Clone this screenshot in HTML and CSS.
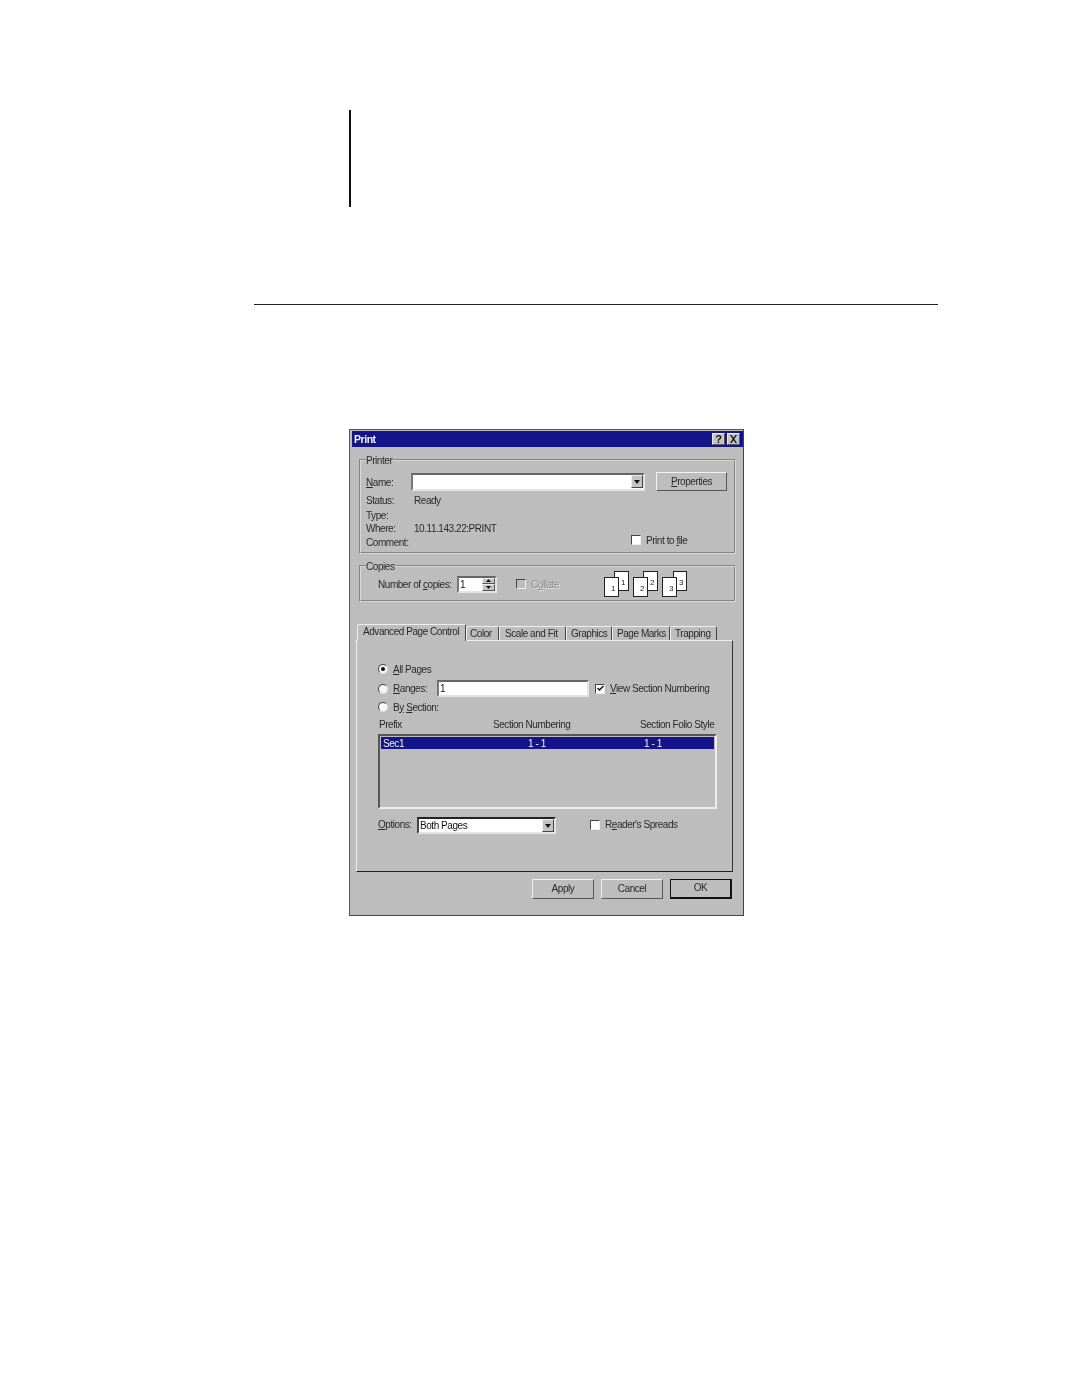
FILE: index.html
```html
<!DOCTYPE html>
<html lang="en">

<head>
    <meta charset="UTF-8">
    <meta name="viewport" content="width=device-width, initial-scale=1.0">
    <title>Print dialog</title>
    <link rel="stylesheet" href="styles.css">
</head>

<body>
    <div class="changeBar"></div>
    <div class="pageRule"></div>

    <div class="dialog">
        <div class="titleBar">
            <span class="titleText">Print</span>
            <div class="titleBtns">
                <button class="titleBtn helpBtn">?</button>
                <button class="titleBtn closeBtn">
                    <svg width="9" height="8" viewBox="0 0 9 8"><path d="M1 0L2.500 0L4.500 2.800L6.500 0L8 0L5.300 4L8 8L6.500 8L4.500 5.200L2.500 8L1 8L3.700 4Z" fill="#111"/></svg>
                </button>
            </div>
        </div>

        <fieldset class="group printerGroup">
            <legend>Printer</legend>
            <div class="row nameRow">
                <label class="rowLabel nameLabel"><u>N</u>ame:</label>
                <div class="combo nameCombo">
                    <span class="comboText"></span>
                    <span class="comboArrow"></span>
                </div>
                <button class="btn propsBtn"><u>P</u>roperties</button>
            </div>
            <div class="row statusRow"><span class="rowLabel">Status:</span><span>Ready</span></div>
            <div class="row typeRow"><span class="rowLabel">Type:</span></div>
            <div class="row whereRow"><span class="rowLabel">Where:</span><span>10.11.143.22:PRINT</span></div>
            <div class="row commentRow">
                <span class="rowLabel">Comment:</span>
                <label class="check printFile"><span class="checkBox"></span><span>Print to <u>f</u>ile</span></label>
            </div>
        </fieldset>

        <fieldset class="group copiesGroup">
            <legend>Copies</legend>
            <div class="row copiesRow">
                <label class="copiesLabel">Number of <u>c</u>opies:</label>
                <div class="spinner">
                    <span class="spinnerText">1</span>
                    <div class="spinBtns">
                        <span class="spinBtn"><svg width="7" height="4" viewBox="0 0 7 4"><path d="M3.500 0L6 3H1Z" fill="#111"/></svg></span>
                        <span class="spinBtn"><svg width="7" height="4" viewBox="0 0 7 4"><path d="M1 1H6L3.500 4Z" fill="#111"/></svg></span>
                    </div>
                </div>
                <label class="check collate"><span class="checkBox disabledBox"></span><span class="disabledText">C<u>o</u>llate</span></label>
                <svg class="collateIcons" width="84" height="26" viewBox="0 0 84 26">
                    <g class="sheet"><rect x="10.500" y="0.500" width="14" height="19"/><text x="17" y="14">1</text></g>
                    <g class="sheet"><rect x="0.500" y="6.500" width="14" height="19"/><text x="7" y="20">1</text></g>
                    <g class="sheet"><rect x="39.500" y="0.500" width="14" height="19"/><text x="46" y="14">2</text></g>
                    <g class="sheet"><rect x="29.500" y="6.500" width="14" height="19"/><text x="36" y="20">2</text></g>
                    <g class="sheet"><rect x="69.500" y="0.500" width="13" height="19"/><text x="75" y="14">3</text></g>
                    <g class="sheet"><rect x="58.500" y="6.500" width="14" height="19"/><text x="65" y="20">3</text></g>
                </svg>
            </div>
        </fieldset>

        <div class="tabs">
            <div class="tab activeTab">Advanced Page Control</div>
            <div class="tab colorTab">Color</div>
            <div class="tab scaleTab">Scale and Fit</div>
            <div class="tab graphicsTab">Graphics</div>
            <div class="tab marksTab">Page Marks</div>
            <div class="tab trapTab">Trapping</div>
        </div>

        <div class="tabPanel">
            <div class="row allRow">
                <label class="radio"><span class="radioDot checked"></span><span><u>A</u>ll Pages</span></label>
            </div>
            <div class="row rangesRow">
                <label class="radio rangesLabel"><span class="radioDot"></span><span><u>R</u>anges:</span></label>
                <div class="textInput">1</div>
                <label class="check viewCheck"><span class="checkBox ticked"><svg width="7" height="7" viewBox="0 0 7 7"><path d="M0.500 3L2.500 5L6.500 1" fill="none" stroke="#111" stroke-width="1.500"/></svg></span><span><u>V</u>iew Section Numbering</span></label>
            </div>
            <div class="row sectionRow">
                <label class="radio"><span class="radioDot"></span><span>B<u>y</u> <u>S</u>ection:</span></label>
            </div>
            <div class="listHead">
                <span class="colPrefix">Prefix</span>
                <span class="colNumbering">Section Numbering</span>
                <span class="colFolio">Section Folio Style</span>
            </div>
            <div class="listBox">
                <div class="listRow">
                    <span class="cellPrefix">Sec1</span>
                    <span class="cellNumbering">1 - 1</span>
                    <span class="cellFolio">1 - 1</span>
                </div>
            </div>
            <div class="row optionsRow">
                <label class="optionsLabel"><u>O</u>ptions:</label>
                <div class="combo optionsCombo">
                    <span class="comboText">Both Pages</span>
                    <span class="comboArrow"></span>
                </div>
                <label class="check spreads"><span class="checkBox"></span><span>R<u>e</u>ader's Spreads</span></label>
            </div>
        </div>

        <div class="actions">
            <button class="btn actionBtn">Apply</button>
            <button class="btn actionBtn">Cancel</button>
            <button class="btn actionBtn okBtn">OK</button>
        </div>
    </div>
</body>

</html>
```

FILE: styles.css
```css
* {
    box-sizing: border-box;
    padding: 0;
    margin: 0;
}

body {
    background-color: #fff;
    font-family: "Liberation Sans", Arial, sans-serif;
    font-size: 10px;
    letter-spacing: -0.45px;
    color: #2a2a2a;
    white-space: nowrap;
}

u {
    text-decoration-thickness: 1px;
}

.changeBar {
    width: 2px;
    height: 97px;
    margin: 110px 0 0 349px;
    background-color: #111;
}

.pageRule {
    width: 684px;
    height: 1px;
    margin: 97px 0 0 254px;
    background-color: #222;
}

/* the reference is a soft scan, so the whole dialog is blurred a little */
.dialog {
    width: 395px;
    height: 487px;
    margin: 124px 0 0 349px;
    padding: 1px 0 0 2px;
    background-color: #bdbdbd;
    border: 1px solid #333;
    border-color: #555 #444 #444 #555;
    filter: blur(0.3px);
}

.titleBar {
    height: 16px;
    padding: 0 3px 0 2px;
    display: flex;
    align-items: center;
    justify-content: space-between;
    background-color: #14148a;
    color: #f4f4f4;
    font-weight: bold;
    font-size: 10.500px;
}

.titleBtns {
    display: flex;
    gap: 2px;
}

.titleBtn {
    width: 13px;
    height: 12px;
    display: flex;
    align-items: center;
    justify-content: center;
    background-color: #c4c4c4;
    border: 1px solid #777;
    border-color: #eee #555 #555 #eee;
    font-family: "Liberation Sans", Arial, sans-serif;
    font-size: 11px;
    font-weight: bold;
    color: #111;
}

/* etched frame, the legend cuts the top edge */
.group {
    width: 377px;
    margin-left: 7px;
    padding: 0 5px;
    border: 2px groove #d8d8d8;
}

.group legend {
    height: 12px;
    padding-right: 1px;
    line-height: 14px;
}

.printerGroup {
    height: 100px;
    margin-top: 7px;
}

.copiesGroup {
    height: 42px;
    margin-top: 6px;
}

.row {
    display: flex;
    align-items: center;
}

.rowLabel {
    width: 48px;
    flex-shrink: 0;
}

.nameLabel {
    width: 45px;
    padding-top: 2px;
}

.nameRow {
    height: 19px;
    margin-top: 6px;
}

.statusRow {
    height: 14px;
    margin-top: 2px;
}

.typeRow {
    height: 14px;
    margin-top: 1px;
}

.whereRow {
    height: 14px;
    margin-top: -1px;
}

.commentRow {
    height: 14px;
}

/* sunken field */
.combo,
.textInput,
.spinner {
    display: flex;
    align-items: center;
    background-color: #fff;
    border: 2px solid #777;
    border-color: #666 #e4e4e4 #e4e4e4 #777;
}

.combo {
    padding-left: 1px;
    justify-content: space-between;
    color: #111;
}

.nameCombo {
    width: 234px;
    height: 18px;
}

.comboArrow {
    width: 12px;
    height: 13px;
    display: flex;
    align-items: center;
    justify-content: center;
    background-color: #c4c4c4;
    border: 1px solid #777;
    border-color: #eee #444 #444 #eee;
}

.comboArrow::after {
    content: "";
    border-style: solid;
    border-width: 4px 3px 0;
    border-color: #111 transparent transparent;
}

.btn {
    display: block;
    background-color: #bdbdbd;
    border: 1px solid #777;
    border-color: #f2f2f2 #555 #555 #f2f2f2;
    font-family: "Liberation Sans", Arial, sans-serif;
    font-size: 10px;
    letter-spacing: -0.45px;
    color: #2a2a2a;
}

.propsBtn {
    width: 71px;
    height: 19px;
    margin-left: 11px;
}

.check {
    display: flex;
    align-items: center;
}

.checkBox {
    width: 10px;
    height: 10px;
    margin-right: 5px;
    display: flex;
    align-items: center;
    justify-content: center;
    background-color: #fff;
    border: 1px solid #777;
    border-color: #444 #eee #eee #444;
}

.disabledBox {
    background-color: #bdbdbd;
}

.disabledText {
    color: #8a8a8a;
    text-shadow: 1px 1px 0 #e4e4e4;
}

.printFile {
    margin: 0 0 4px 217px;
}

.copiesRow {
    height: 26px;
    margin-top: -1px;
    padding-left: 12px;
}

.copiesLabel {
    width: 79px;
    flex-shrink: 0;
}

.spinner {
    width: 40px;
    height: 17px;
    padding-left: 1px;
    justify-content: space-between;
    color: #111;
}

.spinBtns {
    display: flex;
    flex-direction: column;
}

.spinBtn {
    width: 13px;
    height: 6.500px;
    display: flex;
    align-items: center;
    justify-content: center;
    background-color: #c4c4c4;
    border: 1px solid #777;
    border-color: #eee #555 #555 #eee;
}

.collate {
    margin-left: 19px;
}

.collateIcons {
    margin-left: 45px;
    flex-shrink: 0;
}

.sheet rect {
    fill: #fff;
    stroke: #222;
}

.sheet text {
    font-family: "Liberation Sans", Arial, sans-serif;
    font-size: 8px;
    letter-spacing: 0;
    fill: #222;
}

.tabs {
    display: flex;
    align-items: flex-end;
    height: 17px;
    margin: 21px 0 0 5px;
    position: relative;
    z-index: 1;
}

.tab {
    height: 14px;
    line-height: 13px;
    padding-left: 4px;
    border: 1px solid #777;
    border-color: #eee #444 transparent #eee;
    border-bottom: none;
    border-radius: 2px 2px 0 0;
}

.activeTab {
    width: 109px;
    height: 17px;
    line-height: 14px;
    padding-left: 5px;
    background-color: #bdbdbd;
    margin-bottom: -1px;
}

.colorTab {
    width: 33px;
    padding-left: 3px;
}

.scaleTab {
    width: 67px;
    padding-left: 5px;
}

.graphicsTab {
    width: 46px;
}

.marksTab {
    width: 58px;
}

.trapTab {
    width: 47px;
}

.tabPanel {
    width: 377px;
    height: 232px;
    margin-left: 4px;
    padding: 0 0 0 21px;
    border: 1px solid #777;
    border-color: #eee #333 #222 #eee;
}

.radio {
    display: flex;
    align-items: center;
}

.radioDot {
    width: 10px;
    height: 10px;
    margin-right: 5px;
    display: flex;
    align-items: center;
    justify-content: center;
    border-radius: 50%;
    background-color: #f6f6f6;
    border: 1px solid #555;
    border-color: #444 #ddd #ddd #444;
}

.radioDot.checked::after {
    content: "";
    width: 4px;
    height: 4px;
    border-radius: 50%;
    background-color: #111;
}

.allRow {
    height: 14px;
    margin-top: 21px;
}

.rangesRow {
    height: 17px;
    margin-top: 4px;
}

.rangesLabel {
    width: 59px;
    flex-shrink: 0;
}

.textInput {
    width: 152px;
    height: 17px;
    padding-left: 1px;
    color: #111;
}

.viewCheck {
    margin-left: 6px;
}

.sectionRow {
    height: 14px;
    margin-top: 3px;
}

.listHead {
    display: flex;
    height: 12px;
    margin-top: 4px;
    line-height: 14px;
}

.colPrefix {
    width: 115px;
    padding-left: 1px;
}

.colNumbering {
    width: 147px;
}

.listBox {
    width: 339px;
    height: 75px;
    margin-top: 4px;
    padding: 1px;
    border: 2px solid #777;
    border-color: #555 #eee #eee #555;
}

.listRow {
    display: flex;
    height: 12px;
    line-height: 13px;
    background-color: #14148a;
    color: #f0f0f0;
}

.cellPrefix {
    width: 147px;
    padding-left: 2px;
}

.cellNumbering {
    width: 116px;
}

.optionsRow {
    height: 17px;
    margin-top: 8px;
}

.optionsLabel {
    width: 39px;
    margin-bottom: 3px;
}

.optionsCombo {
    width: 139px;
    height: 17px;
    border-top-color: #222;
    border-left-color: #444;
}

.spreads {
    margin: 0 0 2px 34px;
}

.actions {
    display: flex;
    justify-content: flex-end;
    gap: 7px;
    margin: 7px 11px 0 0;
}

.actionBtn {
    width: 62px;
    height: 20px;
    padding-bottom: 2px;
}

.okBtn {
    border: 2px solid #111;
    border-width: 1px 2px 2px 1px;
}
```
